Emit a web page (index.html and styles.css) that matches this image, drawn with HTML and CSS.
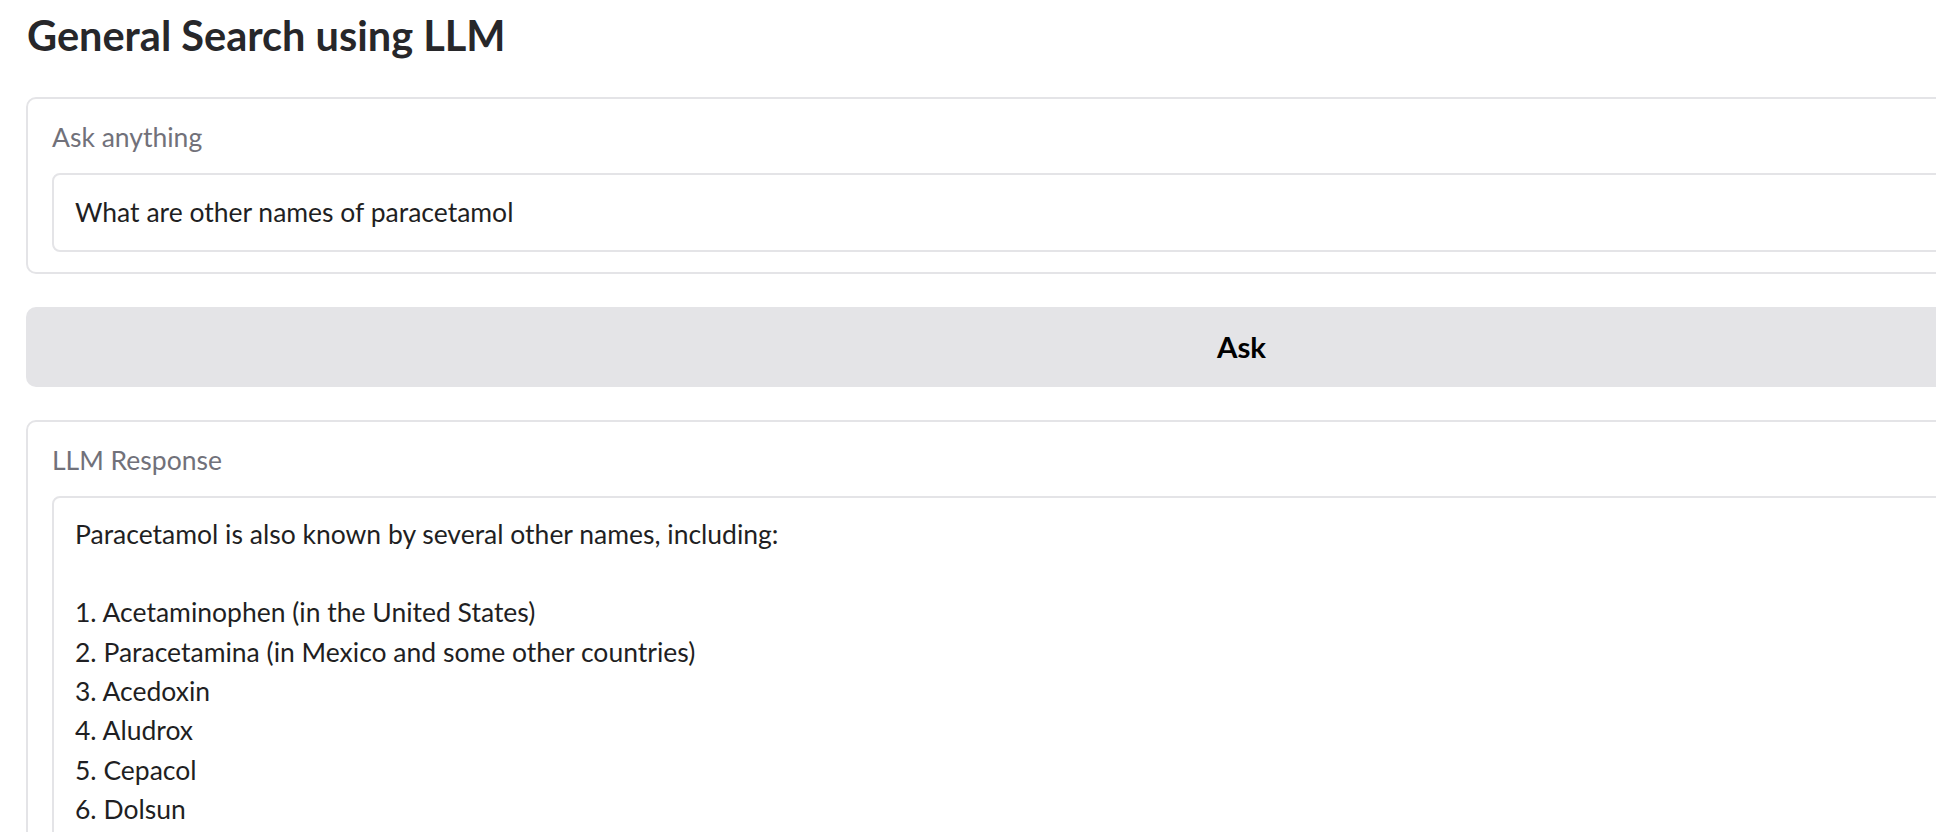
FILE: index.html
```html
<!DOCTYPE html>
<html lang="en">
<head>
<meta charset="utf-8">
<title>General Search using LLM</title>
<link rel="stylesheet" href="styles.css">
</head>
<body>
<main class="app">
  <h1 class="title">General Search using LLM</h1>
  <section class="block">
    <label class="label" for="q">Ask anything</label>
    <div class="input" id="q">What are other names of paracetamol</div>
  </section>
  <button class="btn" type="button">Ask</button>
  <section class="block">
    <span class="label">LLM Response</span>
    <div class="output">
      <p class="line">Paracetamol is also known by several other names, including:</p>
      <p class="line">&nbsp;</p>
      <p class="line">1. Acetaminophen (in the United States)</p>
      <p class="line">2. Paracetamina (in Mexico and some other countries)</p>
      <p class="line">3. Acedoxin</p>
      <p class="line">4. Aludrox</p>
      <p class="line">5. Cepacol</p>
      <p class="line">6. Dolsun</p>
    </div>
  </section>
</main>
</body>
</html>
```

FILE: styles.css
```css
html, body {
  margin: 0;
  padding: 0;
  overflow: hidden;
  background: #ffffff;
}

body {
  font-family: Lato, "Noto Sans", sans-serif;
  color: #27272a;
}

.app {
  width: 2431px;
  padding: 11px 0 0 26px;
  display: flex;
  flex-direction: column;
}

.title {
  margin: 0 0 36px 1px;
  font-size: 41.5px;
  line-height: 1.2;
  font-weight: 700;
  color: #27272a;
}

.block {
  border: 2px solid #e4e4e7;
  border-radius: 10px;
  padding: 23px 22px 20px 24px;
  display: flex;
  flex-direction: column;
  background: #fff;
}

.label {
  font-size: 26.5px;
  line-height: 31px;
  color: #71717a;
  margin-bottom: 20px;
}

.input {
  border: 2px solid #e4e4e7;
  border-radius: 8px;
  padding: 18px 21px;
  font-size: 26.5px;
  line-height: 39px;
  color: #1f1f23;
}

.btn {
  margin: 33px 0;
  height: 80px;
  border: none;
  border-radius: 10px;
  background: #e4e4e7;
  font-family: Lato, "Noto Sans", sans-serif;
  font-size: 29.4px;
  font-weight: 700;
  color: #000;
}

.output {
  border: 2px solid #e4e4e7;
  border-radius: 8px;
  padding: 17px 21px;
  font-size: 26.5px;
  line-height: 39.3px;
  color: #1f1f23;
  height: 600px;
}

.line {
  margin: 0;
}
```
